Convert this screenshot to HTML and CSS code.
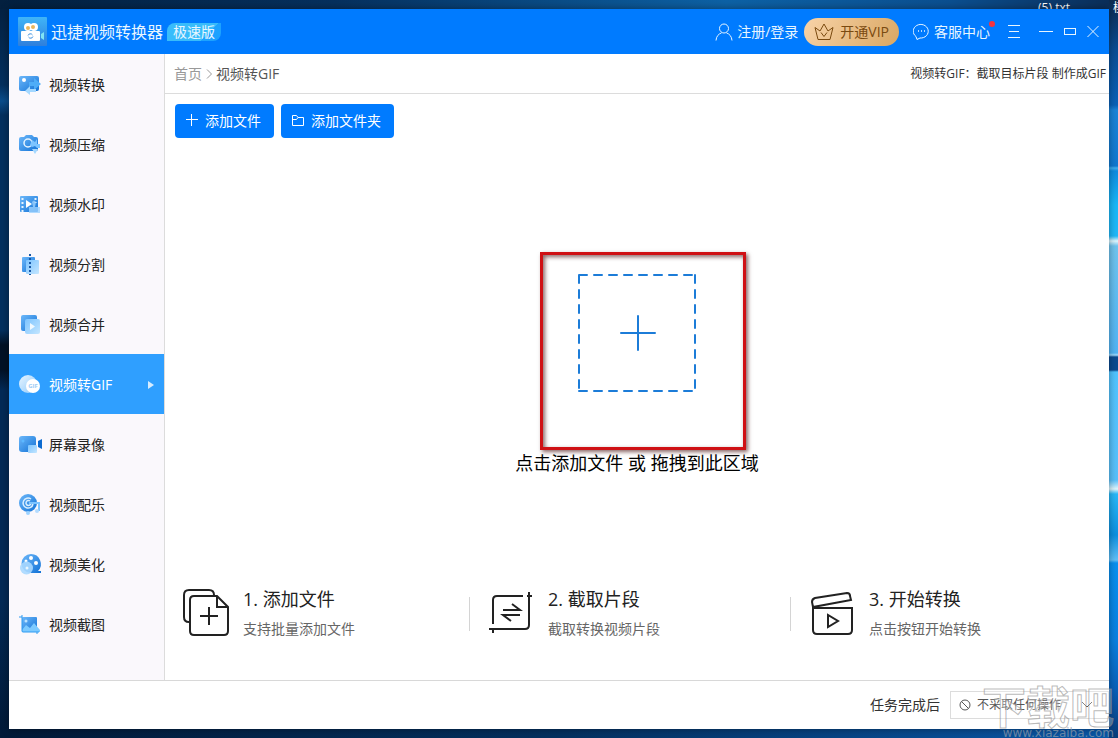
FILE: index.html
```html
<!DOCTYPE html>
<html lang="zh-CN">
<head>
    <meta charset="UTF-8">
    <meta name="viewport" content="width=device-width, initial-scale=1.0">
    <title>迅捷视频转换器</title>
    <link rel="stylesheet" href="styles.css">
</head>
<body>
    <svg class="defs" aria-hidden="true">
        <defs>
            <linearGradient id="g-dark" x1="0" y1="0" x2="1" y2="1">
                <stop offset="0" stop-color="#6db8fa"/>
                <stop offset="1" stop-color="#1272d6"/>
            </linearGradient>
            <linearGradient id="g-light" x1="0" y1="0" x2="1" y2="1">
                <stop offset="0" stop-color="#7cc4ff"/>
                <stop offset="1" stop-color="#c4e6ff"/>
            </linearGradient>
            <linearGradient id="g-white" x1="0" y1="0" x2="1" y2="1">
                <stop offset="0" stop-color="#e8f5ff"/>
                <stop offset="1" stop-color="#8cc8fb"/>
            </linearGradient>
            <linearGradient id="g-logo" x1="0" y1="0" x2="0" y2="1">
                <stop offset="0" stop-color="#3fb4f8"/>
                <stop offset="1" stop-color="#2f7fdc"/>
            </linearGradient>
        </defs>
    </svg>

    <span class="desk-file desk-txt">(5).txt</span>
    <span class="desk-file desk-edge">模</span>

    <div class="window">
        <header class="titlebar">
            <svg class="logo" viewBox="0 0 29 29">
                <rect width="29" height="29" rx="1" fill="url(#g-logo)"/>
                <circle cx="10" cy="10" r="4" fill="#fff"/>
                <circle cx="16" cy="10" r="4" fill="#fff"/>
                <circle cx="10" cy="11" r="2" fill="#e9b65c"/>
                <circle cx="15" cy="10" r="2" fill="#e9b65c"/>
                <rect x="3" y="14" width="19" height="10" rx="1" fill="#fff"/>
                <path d="M23 17l3-2v8l-3-2z" fill="#7fe4f4"/>
                <path d="M10 18.500a2.500 2.500 0 0 1 4.500-.5M15 19.500a2.500 2.500 0 0 1-4.500.5" fill="none" stroke="#3a8fe0"/>
            </svg>
            <h1>迅捷视频转换器</h1>
            <span class="edition">极速版</span>

            <div class="account">
                <a class="head-link" href="#">
                    <svg width="18" height="18" viewBox="0 0 18 18" class="line">
                        <circle cx="9" cy="5.500" r="4.500"/>
                        <path d="M1 17.500c.3-4.200 2.500-6.500 5.500-7.600M17 17.500c-.3-4.200-2.500-6.500-5.500-7.600"/>
                    </svg>
                    注册/登录
                </a>
                <button class="vip" type="button">
                    <svg width="20" height="18" viewBox="0 0 20 18" class="line">
                        <path d="M4 16.500h12l3-12-5 3.500-4-7-4 7-5-3.500zM7 9.500l3 4 3-4"/>
                    </svg>
                    开通VIP
                </button>
                <a class="head-link service" href="#">
                    <svg width="17" height="17" viewBox="0 0 17 17" class="line">
                        <path d="M3 13.500A7.500 6.800 0 1 1 7 15l-3 1.500z"/>
                        <path d="M5 8h1M8 8h1M11 8h1" stroke-width="1.500"/>
                    </svg>
                    客服中心
                </a>
            </div>
            <div class="controls">
                <button type="button" aria-label="菜单"><svg width="14" height="14" viewBox="0 0 14 14" class="line"><path d="M1 .5h12M2 6.500h10M1 12.500h12"/></svg></button>
                <button type="button" aria-label="最小化"><svg width="14" height="14" viewBox="0 0 14 14" class="line"><path d="M0 6.500h14"/></svg></button>
                <button type="button" aria-label="最大化"><svg width="12" height="14" viewBox="0 0 12 14" class="line"><rect x=".5" y="3.500" width="11" height="6"/></svg></button>
                <button type="button" aria-label="关闭"><svg width="12" height="14" viewBox="0 0 12 14" class="line"><path d="M.5 1l11 11M11.500 1l-11 11"/></svg></button>
            </div>
        </header>

        <div class="body">
            <nav class="sidebar">
                <a href="#">
                    <svg class="nav-icon" viewBox="0 0 22 22">
                        <rect x="0" y="2" width="20" height="15" rx="2" fill="url(#g-dark)"/>
                        <circle cx="5" cy="6" r="2" fill="#fff"/>
                        <path d="M10 8h5V4l7 6-7 6V12h-5z" fill="#4fadf8"/>
                        <path d="M17 15h-6v-3l-5 5 5 4v-3h6z" fill="#a4d8ff"/>
                    </svg>
                    视频转换
                </a>
                <a href="#">
                    <svg class="nav-icon" viewBox="0 0 22 22">
                        <path d="M5 3l2-2h6l2 2h2q2 0 2 2v10q0 2-2 2H2q-2 0-2-2V5q0-2 2-2z" fill="url(#g-dark)"/>
                        <circle cx="9" cy="9" r="4" fill="none" stroke="#e6f4ff" stroke-width="1.500"/>
                        <path d="M13 6l3 2 2-3v5h3v4h-3l-2-2-3 1-2-2z" fill="#7cc4ff"/>
                        <path d="M13 15h6l-3 5z" fill="#a4d8ff"/>
                    </svg>
                    视频压缩
                </a>
                <a href="#">
                    <svg class="nav-icon" viewBox="0 0 22 22">
                        <rect x="1" y="2" width="18" height="16" rx="1" fill="url(#g-dark)"/>
                        <path d="M3.500 4v14M16.500 4v5" stroke="#e5f4ff" stroke-width="2" stroke-dasharray="2 2"/>
                        <path d="M7 6l6 4-6 4z" fill="#fff"/>
                        <path d="M13 8q2-3 4 0l-1 5h5v6H10v-6h4z" fill="#9cd2ff" opacity=".8"/>
                    </svg>
                    视频水印
                </a>
                <a href="#">
                    <svg class="nav-icon" viewBox="0 0 22 22">
                        <rect x="3" y="3" width="13" height="15" rx="1" fill="url(#g-dark)"/>
                        <rect x="7" y="6" width="13" height="14" rx="1" fill="url(#g-light)"/>
                        <path d="M11 0v21" stroke="#1859a8" stroke-width="2" stroke-dasharray="2 2"/>
                    </svg>
                    视频分割
                </a>
                <a href="#">
                    <svg class="nav-icon" viewBox="0 0 22 22">
                        <rect x="2" y="1" width="16" height="16" rx="2" fill="url(#g-dark)"/>
                        <rect x="6" y="5" width="15" height="15" rx="2" fill="url(#g-light)"/>
                        <path d="M11 9l5 3.500-5 3.500z" fill="#f0f9ff"/>
                    </svg>
                    视频合并
                </a>
                <a href="#" class="active">
                    <svg class="nav-icon" viewBox="0 0 22 22">
                        <circle cx="9" cy="10" r="9" fill="url(#g-white)"/>
                        <circle cx="14" cy="12" r="7" fill="#fff"/>
                        <text x="14" y="14" class="gif-mark">GIF</text>
                    </svg>
                    视频转GIF
                    <svg class="arrow" width="6" height="8" viewBox="0 0 6 8"><path d="M0 0l6 4-6 4z" fill="#d6ecff"/></svg>
                </a>
                <a href="#">
                    <svg class="nav-icon" viewBox="0 0 22 22">
                        <rect x="0" y="2" width="17" height="16" rx="3" fill="url(#g-dark)"/>
                        <circle cx="4" cy="7" r="1.500" fill="#5cb8ff"/>
                        <rect x="9" y="11" width="9" height="8" rx="1" fill="url(#g-light)"/>
                        <path d="M19 7l4-2v10l-4-2z" fill="#0c6bd0"/>
                    </svg>
                    屏幕录像
                </a>
                <a href="#">
                    <svg class="nav-icon" viewBox="0 0 22 22">
                        <circle cx="9" cy="9" r="9" fill="url(#g-dark)"/>
                        <path d="M12 5a5 5 0 1 0 2 5M11 7a2.500 2.500 0 1 0 1 2" fill="none" stroke="#d8eeff" stroke-width="1.500"/>
                        <path d="M10 9h10v8" fill="none" stroke="#7cc4ff" stroke-width="2"/>
                        <circle cx="9" cy="19" r="2" fill="#9cd2ff"/>
                        <circle cx="18" cy="17" r="2" fill="#b4dcff"/>
                    </svg>
                    视频配乐
                </a>
                <a href="#">
                    <svg class="nav-icon" viewBox="0 0 22 22">
                        <path d="M12 0a10 10 0 0 1 7 17h3v2H12a9.500 9.500 0 0 1 0-19z" fill="url(#g-dark)"/>
                        <circle cx="12" cy="4" r="2" fill="#fff"/>
                        <circle cx="17" cy="9" r="2" fill="#fff"/>
                        <circle cx="7" cy="7" r="1.500" fill="#fff"/>
                        <circle cx="7.500" cy="14" r="6.500" fill="#a8d8ff" opacity=".9"/>
                        <circle cx="8" cy="14" r="1.500" fill="#e8f6ff"/>
                    </svg>
                    视频美化
                </a>
                <a href="#">
                    <svg class="nav-icon" viewBox="0 0 22 22">
                        <rect x="3" y="3" width="15" height="15" rx="1" fill="url(#g-dark)"/>
                        <circle cx="7" cy="7" r="1.500" fill="#bce3ff"/>
                        <path d="M3 16l4-5 4 3 4-5 6 7v2H3z" fill="#7ccaff"/>
                        <path d="M0 3h3M3 1v16q0 1 1 1h16M18 18v2" fill="none" stroke="#2d9bf2"/>
                    </svg>
                    视频截图
                </a>
            </nav>

            <main class="main">
                <div class="crumbs">
                    <a href="#">首页</a>
                    <svg width="6" height="10" viewBox="0 0 6 10" class="line"><path d="M1 .5L5.500 5 1 9.500"/></svg>
                    <span>视频转GIF</span>
                    <p class="tip">视频转GIF：截取目标片段 制作成GIF</p>
                </div>

                <div class="toolbar">
                    <button type="button">
                        <svg width="12" height="14" viewBox="0 0 12 14" class="line"><path d="M5.500 0v12M0 5.500h12"/></svg>
                        添加文件
                    </button>
                    <button type="button">
                        <svg width="12" height="14" viewBox="0 0 12 14" class="line"><path d="M.5 11.500v-10h4l1.500 2h5.500v8zM.5 5.500h4l1.500-2"/></svg>
                        添加文件夹
                    </button>
                </div>

                <div class="drop">
                    <button class="drop-target" type="button">
                        <svg width="118" height="118" viewBox="0 0 118 118">
                            <path d="M1 1h116M1 117h116M1 1v116M117 1v116" stroke-dasharray="8 7"/>
                            <path d="M60 42v34M43 59h34"/>
                        </svg>
                        <span>点击添加文件 或 拖拽到此区域</span>
                        <i class="highlight"></i>
                    </button>
                </div>

                <div class="steps">
                    <section class="step">
                        <svg width="48" height="50" viewBox="0 0 48 50">
                            <path d="M6 32q-5 0-5-5V5q0-5 5-5h20q5 0 5 5" transform="translate(0 1)"/>
                            <path d="M11 7h23l11 11v24q0 4-4 4H11q-4 0-4-4V11q0-4 4-4zM34 7v11h11"/>
                            <path d="M26 18v18M17 27h18"/>
                        </svg>
                        <div>
                            <h2>1. 添加文件</h2>
                            <p>支持批量添加文件</p>
                        </div>
                    </section>
                    <section class="step">
                        <svg width="48" height="50" viewBox="0 0 48 50">
                            <path d="M5 35V11q0-4 4-4h26M41 3v33q0 4-4 4H1M5 39v5M39 7h5"/>
                            <path d="M15 21h17l-8-6M32 26H15l8 6"/>
                        </svg>
                        <div>
                            <h2>2. 截取片段</h2>
                            <p>截取转换视频片段</p>
                        </div>
                    </section>
                    <section class="step">
                        <svg width="48" height="50" viewBox="0 0 48 50">
                            <path d="M4 19v22q0 4 4 4h31q4 0 4-4V19z"/>
                            <path d="M4 18l-1-5q0-3 3-4l32-5q3 0 3 3l1 4z"/>
                            <path d="M19 26v12l10-6z"/>
                        </svg>
                        <div>
                            <h2>3. 开始转换</h2>
                            <p>点击按钮开始转换</p>
                        </div>
                    </section>
                </div>
            </main>
        </div>

        <footer class="footer">
            <label for="after">任务完成后</label>
            <div class="picker">
                <svg width="12" height="12" viewBox="0 0 12 12" class="line"><circle cx="6" cy="6" r="5"/><path d="M2.500 2.500l7 7"/></svg>
                <select id="after">
                    <option>不采取任何操作</option>
                    <option>关闭计算机</option>
                </select>
                <svg width="12" height="8" viewBox="0 0 12 8" class="line"><path d="M1 1l5 5 5-5"/></svg>
            </div>
        </footer>
    </div>

    <div class="watermark">
        <strong>下载吧</strong>
        <span>www.xiazaiba.com</span>
    </div>
</body>
</html>
```
FILE: styles.css
```css
* {
    box-sizing: border-box;
}
body {
    position: relative;
    display: flex;
    min-height: 100vh;
    margin: 0;
    padding: 9px;
    overflow: hidden;
    font-family: "Open Sans", "Noto Sans CJK SC", sans-serif;
    font-size: 14px;
    line-height: 20px;
    color: #222;
    /* right edge, top edge, left edge, bottom edge of the wallpaper */
    background:
        linear-gradient(#0d2a50 0, #0a4d94 50px, #0b62b8 105px, #1b84d8 110px, #1078d0 166px, #40b0f0 168px, #108ce0 171px, #18b8f8 205px, #20b8f8 236px, #e0f8ff 241px, #70c4ee 246px, #50b4f4 353px, #a0dcff 355px, #0a4a90 357px, #0a4a90 370px, #50c4ff 372px, #58c0fa 480px, #e0f8ff 489px, #28b8f8 494px, #0c90e0 535px, #60c0f8 560px, #0890f0 563px, #0a80e0 640px, #0a60b8 690px, #083c78 738px) right top / 9px 100% no-repeat,
        linear-gradient(to right, #03203f 0, #06305e 30%, #0d62a6 65%, #0b4f90 85%, #0b2c56 100%) left top / 100% 9px no-repeat,
        linear-gradient(#04203f 0, #04305f 85px, #0a4e8c 101px, #04305f 115px, #04305f 330px, #021226 345px, #021226 370px, #032a56 390px, #032a56 600px, #021a38 738px) left top / 9px 100% no-repeat,
        linear-gradient(to right, #021a38 0, #04305f 50%, #0a58a8 100%);
}
a {
    color: inherit;
    text-decoration: none;
}
button, select {
    padding: 0;
    border: none;
    background: none;
    font: inherit;
    color: inherit;
    cursor: pointer;
}
h1, h2, p {
    margin: 0;
    font-weight: normal;
}
svg {
    flex: none;
}
.defs {
    position: absolute;
    width: 0;
    height: 0;
}
.line {
    fill: none;
    stroke: currentColor;
    stroke-width: 1;
}
.desk-file {
    position: absolute;
    top: -1px;
    font-size: 12px;
    line-height: 18px;
    color: #fff;
}
.desk-txt {
    right: 48px;
}
.desk-edge {
    right: -7px;
}
.window {
    position: relative;
    display: flex;
    flex: 1;
    flex-direction: column;
    background: #fff;
    box-shadow: 0 0 8px rgba(0, 0, 0, 0.4);
}

/* title bar */
.titlebar {
    display: flex;
    align-items: center;
    height: 45px;
    padding: 0 10px 0 9px;
    background: #007bff;
    color: #e8f6ff;
}
.logo {
    width: 29px;
    height: 29px;
    margin-right: 4px;
}
.titlebar h1 {
    font-size: 16px;
    line-height: 24px;
}
.edition {
    padding: 0 6px;
    border-radius: 8px 0 8px 0;
    background: linear-gradient(135deg, #38bcfb 0 72%, #1ca2ff 72%);
    margin-left: 4px;
    line-height: 18px;
}
.account {
    display: flex;
    align-items: center;
    gap: 6px;
    margin-left: auto;
}
.head-link {
    display: flex;
    align-items: center;
    gap: 4px;
}
.service {
    position: relative;
    margin-left: 8px;
}
.service::after {
    content: "";
    position: absolute;
    top: -1px;
    right: -5px;
    width: 6px;
    height: 6px;
    border-radius: 3px;
    background: #f5333f;
}
.vip {
    display: flex;
    align-items: center;
    gap: 6px;
    height: 28px;
    padding: 0 10px;
    border-radius: 14px;
    background: linear-gradient(120deg, #f8d3a8, #d9a763);
    color: #7a4a10;
}
.controls {
    display: flex;
    align-items: center;
    gap: 11px;
    margin-left: 17px;
}
.controls button {
    display: flex;
}
.controls button:first-child {
    margin-right: 7px;
}

/* sidebar */
.body {
    display: flex;
    flex: 1;
}
.sidebar {
    width: 156px;
    border-right: 1px solid #dcdcdc;
    background: #faf8fc;
}
.sidebar a {
    display: flex;
    align-items: center;
    gap: 8px;
    height: 60px;
    padding: 1px 10px 0;
}
.sidebar .active {
    background: #2f9fff;
    color: #fff;
}
.nav-icon {
    width: 22px;
    height: 22px;
    overflow: visible;
}
.gif-mark {
    font-size: 6px;
    font-weight: bold;
    text-anchor: middle;
    fill: #9ccbf5;
}
.arrow {
    margin-left: auto;
}

/* content */
.main {
    display: flex;
    flex: 1;
    flex-direction: column;
    min-width: 0;
}
.crumbs {
    display: flex;
    align-items: center;
    gap: 4px;
    height: 40px;
    padding: 0 3px 0 9px;
    border-bottom: 1px solid #dcdcdc;
    color: #555;
}
.crumbs a, .crumbs svg {
    color: #999;
}
.tip {
    margin-left: auto;
    font-size: 12px;
    color: #333;
}
.toolbar {
    display: flex;
    gap: 7px;
    padding: 10px 10px 0;
}
.toolbar button {
    display: flex;
    align-items: center;
    gap: 7px;
    height: 34px;
    padding: 0 13px 0 11px;
    border-radius: 4px;
    background: #007bff;
    color: #fff;
}
.drop {
    display: flex;
    flex: 1;
    align-items: center;
    justify-content: center;
    padding-top: 28px;
}
.drop-target {
    position: relative;
    display: flex;
    flex-direction: column;
    align-items: center;
    gap: 58px;
    font-size: 18px;
    line-height: 26px;
    color: #000;
}
.drop-target svg {
    fill: none;
    stroke: #1c7cd8;
    stroke-width: 2;
    stroke-linecap: round;
}
.highlight {
    position: absolute;
    top: -22px;
    left: calc(50% - 97px);
    width: 206px;
    height: 198px;
    border: 3px solid #cf1014;
    box-shadow: 2px 2px 4px rgba(60, 0, 0, 0.6), inset 2px 2px 4px rgba(60, 0, 0, 0.6);
}
.steps {
    display: grid;
    grid-template-columns: 305fr 321fr 318fr;
    padding-bottom: 36px;
}
.step {
    display: flex;
    align-items: center;
    gap: 12px;
    padding-left: 18px;
}
.step::after {
    content: "";
    width: 1px;
    height: 34px;
    margin-left: auto;
    background: #d4d4d4;
}
.step:last-child::after {
    display: none;
}
.step svg {
    fill: none;
    stroke: #222;
    stroke-width: 2;
}
.step h2 {
    font-size: 18px;
    line-height: 30px;
}
.step p {
    line-height: 30px;
    color: #666;
}

/* footer */
.footer {
    display: flex;
    align-items: center;
    justify-content: flex-end;
    gap: 10px;
    height: 49px;
    border-top: 1px solid #d8d8d8;
    color: #333;
}
.picker {
    display: flex;
    align-items: center;
    gap: 6px;
    width: 159px;
    height: 28px;
    padding: 0 15px 0 8px;
    border: 1px solid #dcdcdc;
    font-size: 12px;
    color: #555;
}
.picker select {
    flex: 1;
    min-width: 0;
    appearance: none;
}

.watermark {
    position: absolute;
    right: 4px;
    bottom: -1px;
    display: flex;
    flex-direction: column;
    align-items: flex-end;
    pointer-events: none;
}
.watermark strong {
    font-family: "Noto Sans CJK SC", sans-serif;
    font-size: 44px;
    line-height: 44px;
    color: rgba(255, 255, 255, 0.3);
    -webkit-text-stroke: 1px rgba(140, 140, 140, 0.6);
}
.watermark span {
    font-family: "DejaVu Sans", sans-serif;
    font-size: 12px;
    line-height: 12px;
    color: rgba(150, 160, 170, 0.7);
}
```
